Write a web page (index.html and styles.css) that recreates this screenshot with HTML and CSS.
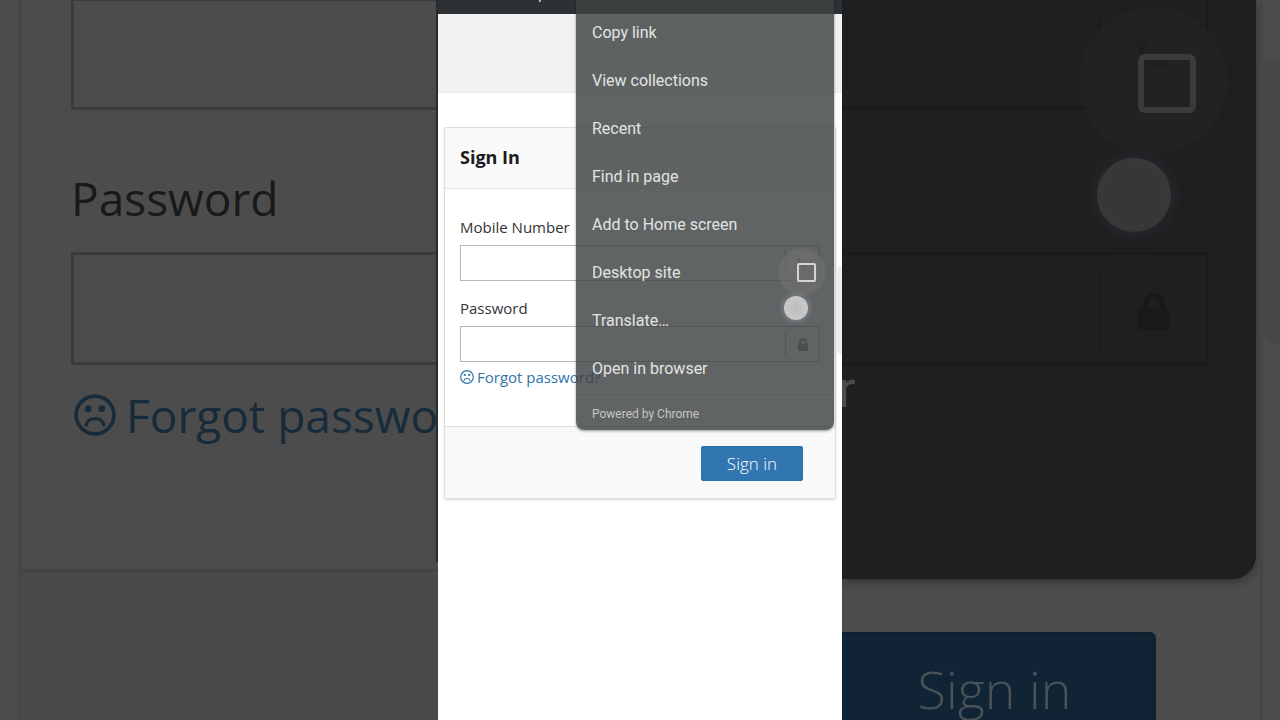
FILE: index.html
```html
<!DOCTYPE html>
<html lang="en">
<head>
    <meta charset="UTF-8">
    <meta name="viewport" content="width=device-width, initial-scale=1.0">
    <title>Sign In</title>
    <link rel="stylesheet" href="styles.css">
</head>
<body>
    <svg class="sprite" aria-hidden="true">
        <symbol id="frown" viewBox="0 0 40 40">
            <circle cx="20" cy="20" r="18" fill="none" stroke="currentColor" stroke-width="3.4"/>
            <circle cx="13.5" cy="14" r="3.2" fill="currentColor"/>
            <circle cx="26.5" cy="14" r="3.2" fill="currentColor"/>
            <path d="M11.5 29.5C13.5 21.5 26.5 21.5 28.5 29.5" fill="none" stroke="currentColor" stroke-width="3.2" stroke-linecap="round"/>
        </symbol>
        <symbol id="lock" viewBox="0 0 32 40">
            <path d="M3 18h1v-5a12 12 0 0 1 24 0v5h1a3 3 0 0 1 3 3v16a3 3 0 0 1-3 3H3a3 3 0 0 1-3-3V21a3 3 0 0 1 3-3zm7 0h12v-5a6 6 0 0 0-12 0z" fill="currentColor"/>
        </symbol>
        <symbol id="phone" viewBox="0 0 40 40">
            <path d="M2 4Q6 0 11 3Q15 8 10 14L9 19Q14 25 21 27Q27 25 33 29Q29 34 21 32Q9 28 4 15Q0 9 2 4z" fill="currentColor"/>
        </symbol>
    </svg>
    <main class="stage">
        <section class="side side-left" aria-hidden="true">
            <div class="big-card">
                <div class="big-body">
                    <input class="big-input first" type="text" tabindex="-1" aria-label="Mobile Number">
                    <label class="big-label" for="big-password">Password</label>
                    <input class="big-input" id="big-password" type="password" tabindex="-1">
                    <a class="big-forgot" href="#" tabindex="-1"><svg><use href="#frown"/></svg>Forgot password?</a>
                </div>
                <div class="big-footer"></div>
            </div>
            <span class="menu-edge"></span>
        </section>

        <section class="phone">
            <header class="topbar"><span>p</span></header>
            <div class="banner"></div>
            <form class="card">
                <h1 class="card-header">Sign In</h1>
                <div class="card-body">
                    <label for="mobile">Mobile Number</label>
                    <div class="field">
                        <input id="mobile" type="tel">
                        <span class="addon"><svg><use href="#phone"/></svg></span>
                    </div>
                    <label for="password">Password</label>
                    <div class="field">
                        <input id="password" type="password">
                        <span class="addon"><svg><use href="#lock"/></svg></span>
                    </div>
                    <a class="forgot" href="#"><svg><use href="#frown"/></svg>Forgot password?</a>
                </div>
                <div class="card-footer">
                    <button class="submit" type="button">Sign in</button>
                </div>
            </form>
            <span class="scroll-thumb"></span>
            <nav class="menu">
                <button type="button">Copy link</button>
                <button type="button">View collections</button>
                <button type="button">Recent</button>
                <button type="button">Find in page</button>
                <button type="button">Add to Home screen</button>
                <label class="menu-check">Desktop site <input type="checkbox"></label>
                <button type="button">Translate…</button>
                <button type="button">Open in browser</button>
                <p class="powered">Powered by Chrome</p>
                <span class="touch"></span>
            </nav>
        </section>

        <section class="side side-right" aria-hidden="true">
            <div class="big-menu">
                <div class="big-field first"><span class="big-addon"><svg><use href="#phone"/></svg></span></div>
                <div class="big-field"><span class="big-addon"><svg><use href="#lock"/></svg></span></div>
                <div class="big-item">r</div>
                <div class="big-line"></div>
                <input class="big-check" type="checkbox" tabindex="-1" aria-label="Desktop site">
                <span class="big-ripple"></span>
                <span class="big-touch"></span>
            </div>
            <button class="big-submit" type="button" tabindex="-1">Sign in</button>
            <span class="big-edge"></span>
            <span class="big-thumb"></span>
        </section>
    </main>
</body>
</html>
```

FILE: styles.css
```css
* {
    box-sizing: border-box;
}
body {
    margin: 0;
    font-family: "Open Sans", sans-serif;
    background-color: #4c4c4c;
}
.sprite {
    position: absolute;
    width: 0;
    height: 0;
}
input, button {
    font-family: inherit;
    margin: 0;
    outline: none;
}
a {
    text-decoration: none;
}
.stage {
    display: grid;
    grid-template-columns: 1fr 404px 1fr;
    height: 100vh;
    overflow: hidden;
}
.side {
    position: relative;
    min-width: 0;
    overflow: hidden;
    background-color: #4c4c4c;
}

/* phone screen */
.phone {
    position: relative;
    overflow: hidden;
    background-color: #fff;
}
.topbar {
    height: 14px;
    padding-left: 100px;
    overflow: hidden;
    background-color: #2e3133;
    color: #ddd;
    font: 16px/16px Roboto, sans-serif;
}
.topbar span {
    display: block;
    margin-top: -14px;
}
.banner {
    height: 79px;
    background-color: #f2f2f2;
    border-bottom: 1px solid #ececec;
}
.card {
    margin: 34px 6px 0;
    border: 1px solid #ddd;
    border-radius: 2px;
    box-shadow: 0 1px 2px rgba(0,0,0,0.15);
}
.card-header {
    margin: 0;
    padding: 0 15px 1px;
    font-size: 18px;
    line-height: 59px;
    color: #1b1b1b;
    background-color: #f9f9f9;
    border-bottom: 1px solid #e2e2e2;
}
.card-body {
    padding: 22px 15px 33px;
}
.card-body label {
    display: block;
    padding-bottom: 2px;
    font-size: 15px;
    line-height: 32px;
    color: #333;
}
.field {
    display: flex;
    height: 36px;
    margin-bottom: 11px;
    padding: 4px 0;
    border: 1px solid #b8b8b8;
}
.field input {
    flex: 1;
    min-width: 0;
    border: 0;
    background: none;
}
.addon {
    display: flex;
    align-items: center;
    justify-content: center;
    width: 34px;
    border-left: 1px solid #aaa;
    color: #888;
}
.addon svg {
    width: 12px;
    height: 13px;
}
.forgot {
    display: flex;
    align-items: center;
    gap: 3px;
    margin-top: -12px;
    font-size: 15px;
    line-height: 32px;
    color: #3174a8;
}
.forgot svg {
    width: 14px;
    height: 14px;
}
.card-footer {
    display: flex;
    justify-content: flex-end;
    padding: 19px 32px 17px;
    background-color: #f9f9f9;
    border-top: 1px solid #ddd;
}
.submit {
    width: 102px;
    height: 35px;
    border: 1px solid #2b6da6;
    border-radius: 2px;
    background-color: #3276b1;
    color: #fff;
    font-size: 17px;
    font-weight: 300;
}
.scroll-thumb {
    position: absolute;
    top: 266px;
    right: 0;
    width: 5px;
    height: 88px;
    border-radius: 4px 0 0 4px;
    background-color: #eee;
}

/* browser menu */
.menu {
    position: absolute;
    top: 0;
    right: 8px;
    width: 258px;
    padding-top: 8px;
    border-radius: 0 0 8px 8px;
    background-color: rgba(62,66,66,0.82);
    box-shadow: 0 1px 3px rgba(0,0,0,0.4);
    font-family: Roboto, sans-serif;
    color: #e3e4e4;
}
.menu button, .menu-check {
    display: flex;
    align-items: center;
    justify-content: space-between;
    width: 100%;
    height: 48px;
    padding: 0 18px 0 16px;
    border: 0;
    background: none;
    color: inherit;
    font-size: 16px;
}
.menu-check input {
    appearance: none;
    width: 19px;
    height: 19px;
    border: 2px solid #d3d4d4;
    border-radius: 2px;
}
.menu-check {
    background: radial-gradient(circle at 226px 24px, rgba(120,118,118,0.4) 23px, transparent 24px);
}
.powered {
    margin: 5px 0 0;
    padding: 0 16px;
    border-top: 1px solid #686b6b;
    font-size: 12px;
    line-height: 32px;
    color: #c4c5c5;
}
.touch {
    position: absolute;
    top: 296px;
    right: 26px;
    width: 24px;
    height: 24px;
    border-radius: 50%;
    background: radial-gradient(circle, #bdbdbd, #d0d0d2);
    box-shadow: 0 0 4px 2px rgba(150,150,170,0.5);
}

/* enlarged form on the left */
.big-card {
    height: 100%;
    margin-left: 18px;
    border-left: 3px solid #464646;
}
.big-body {
    display: flex;
    flex-direction: column;
    height: 572px;
    padding-left: 50px;
    border-bottom: 3px solid #444;
}
.big-input {
    flex: none;
    width: 100%;
    height: 113px;
    border: solid #3b3b3b;
    border-width: 3px 0 3px 3px;
    background: none;
}
.big-input.first {
    height: 110px;
    border-top-width: 1px;
}
.big-label {
    height: 142px;
    padding-top: 34px;
    font-size: 46px;
    line-height: 108px;
    color: #191919;
}
.big-forgot {
    display: flex;
    align-items: center;
    gap: 10px;
    padding-left: 3px;
    font-size: 46px;
    line-height: 100px;
    white-space: nowrap;
    color: #172b3a;
}
.big-forgot svg {
    flex: none;
    width: 42px;
    height: 42px;
}
.big-footer {
    height: 100%;
    background-color: #4a4a4a;
}
.menu-edge {
    position: absolute;
    top: 0;
    right: 0;
    width: 2px;
    height: 562px;
    background-color: #2a2a2a;
}

/* enlarged menu on the right */
.side-right {
    display: flex;
    flex-direction: column;
    align-items: flex-start;
    gap: 53px;
}
.big-menu {
    position: relative;
    flex: none;
    width: calc(100% - 24px);
    height: 579px;
    border-radius: 0 0 24px 0;
    background-color: #1e1f20;
    box-shadow: 0 2px 10px rgba(0,0,0,0.4);
}
.big-field {
    display: flex;
    justify-content: flex-end;
    height: 113px;
    margin-right: 47px;
    padding: 15px 0 10px;
    border: solid #1a1c1c;
    border-width: 3px 3px 3px 0;
}
.big-field.first {
    height: 109px;
    margin-bottom: 143px;
    border-top: 0;
}
.big-addon {
    display: flex;
    align-items: center;
    justify-content: center;
    width: 107px;
    border-left: 2px solid #1a1c1c;
    color: #181a19;
}
.big-addon svg {
    width: 40px;
    height: 38px;
}
.big-item {
    height: 112px;
    font: 52px/50px Roboto, sans-serif;
    color: #4b4b4b;
    text-indent: -4px;
}
.big-line {
    border-top: 3px solid #202220;
}
.big-check {
    appearance: none;
    position: absolute;
    z-index: 1;
    top: 54px;
    right: 60px;
    width: 58px;
    height: 59px;
    border: 6px solid #3b3b3b;
    border-radius: 7px;
}
.big-ripple {
    position: absolute;
    top: 7px;
    right: 29px;
    width: 148px;
    height: 148px;
    border-radius: 50%;
    background-color: rgba(44,42,42,0.3);
}
.big-touch {
    position: absolute;
    top: 158px;
    right: 85px;
    width: 74px;
    height: 74px;
    border-radius: 50%;
    background: radial-gradient(circle, #353636, #39393b);
    box-shadow: 0 0 14px 4px rgba(50,50,58,0.5);
}
.big-submit {
    flex: none;
    width: calc(100% - 124px);
    height: 112px;
    padding: 0 6px 0 0;
    border: solid #10202e;
    border-width: 3px 3px 3px 0;
    border-radius: 0 6px 6px 0;
    background-color: #102436;
    color: #4a5157;
    font-size: 52px;
    font-weight: 300;
}
.big-edge {
    position: absolute;
    top: 0;
    right: 17px;
    width: 3px;
    height: 100%;
    background-color: #464646;
}
.big-thumb {
    position: absolute;
    top: 60px;
    right: 0;
    width: 17px;
    height: 284px;
    border-radius: 12px 0 0 12px;
    background-color: #474747;
}
```
